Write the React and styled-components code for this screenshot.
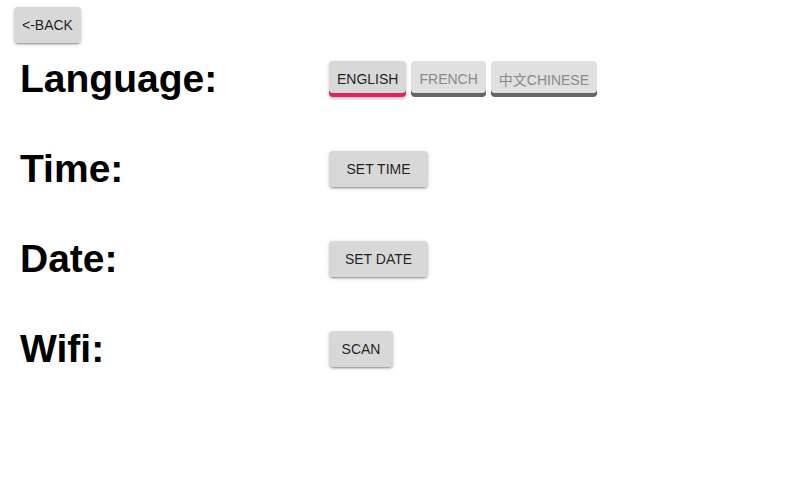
import React, { useState } from "react";
import styled, { createGlobalStyle } from "styled-components";

const GlobalStyle = createGlobalStyle`
  body {
    margin: 0;
    background: #FFFFFF;
    font-family: "Liberation Sans", Arial, "Noto Sans CJK SC", sans-serif;
  }
`;

const Page = styled.div`
    padding: 7px 14px;
`;

const Button = styled.button`
    height: 36px;
    min-width: ${props => props.wide ? "99px" : "64px"};
    padding: 0 12px;
    border: none;
    border-radius: 4px;
    background: #D8D8D8;
    color: rgba(0, 0, 0, 0.87);
    font-family: "Liberation Sans", Arial, "Noto Sans CJK SC", sans-serif;
    font-size: 14px;
    text-transform: uppercase;
    cursor: pointer;
    box-shadow: 0px 3px 1px -2px rgba(0,0,0,0.2), 0px 2px 2px 0px rgba(0,0,0,0.14), 0px 1px 5px 0px rgba(0,0,0,0.12);
`;

const BackButton = styled(Button)`
    min-width: 0;
    padding: 0 8px;
`;

const Settings = styled.div`
    display: grid;
    grid-template-columns: 309px auto;
    grid-auto-rows: 44px;
    row-gap: 46px;
    align-items: center;
    margin-top: 14px;
    padding-left: 6px;
`;

const Label = styled.h1`
    margin: 0;
    font-size: 39px;
    font-weight: bold;
    color: #000000;
`;

const Controls = styled.div`
    display: flex;
    align-items: center;
    gap: 5px;
`;

const Tab = styled.button`
    height: 36px;
    padding: 0 8px;
    border: none;
    border-radius: 4px;
    background: ${props => props.active ? "#D8D8D8" : "#E0E0E0"};
    color: ${props => props.active ? "rgba(0, 0, 0, 0.87)" : "#8A8A8A"};
    font-family: "Liberation Sans", Arial, "Noto Sans CJK SC", sans-serif;
    font-size: 14px;
    text-transform: uppercase;
    cursor: pointer;
    box-shadow: inset 0 -4px 0 ${props => props.active ? "#E91E63" : "#666666"}
        ${props => props.active ? ", 0px 2px 2px 0px rgba(0,0,0,0.14), 0px 1px 4px 0px rgba(0,0,0,0.12)" : ""};
`;

const languages = [
    { id: "en", label: "English" },
    { id: "fr", label: "French" },
    { id: "zh", label: "中文Chinese" }
];

export default function App() {
    const [lang, setLang] = useState("en");

    return (
        <Page>
            <GlobalStyle />
            <BackButton>&lt;-Back</BackButton>
            <Settings>
                <Label>Language:</Label>
                <Controls>
                    {languages.map(l => (
                        <Tab key={l.id} active={lang === l.id} onClick={() => setLang(l.id)}>
                            {l.label}
                        </Tab>
                    ))}
                </Controls>

                <Label>Time:</Label>
                <Controls>
                    <Button wide>Set Time</Button>
                </Controls>

                <Label>Date:</Label>
                <Controls>
                    <Button wide>Set Date</Button>
                </Controls>

                <Label>Wifi:</Label>
                <Controls>
                    <Button>Scan</Button>
                </Controls>
            </Settings>
        </Page>
    );
}
